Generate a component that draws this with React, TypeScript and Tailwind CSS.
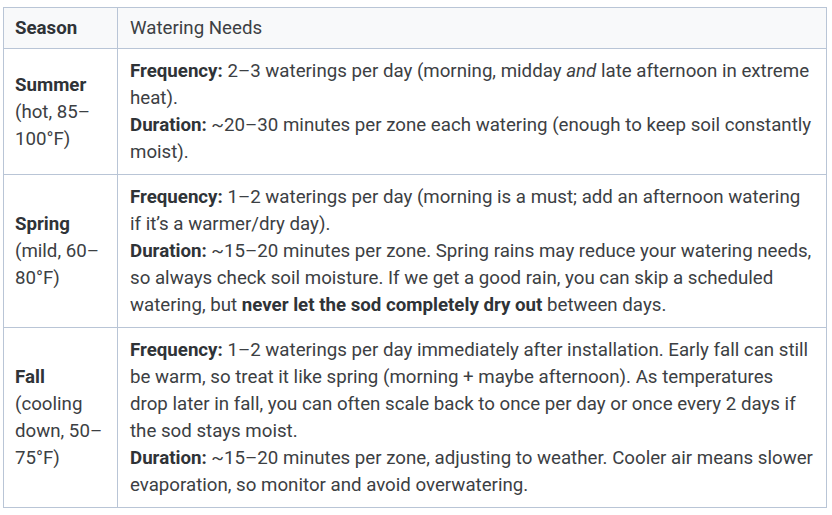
import React from "react";

const cell = "border border-[#b9c5d6] align-top";

export default function App() {
  return (
    <div className="bg-white w-[832px] h-[515px] pl-[3px] pt-[7px] overflow-hidden" style={{ fontFamily: "Roboto, 'Liberation Sans', sans-serif" }}>
      <table className="w-[824px] table-fixed border-collapse text-[18.7px] leading-[27px] text-[#3c4043]">
        <colgroup>
          <col className="w-[114px]" />
          <col />
        </colgroup>
        <thead>
          <tr className="bg-[#f8f9fa]">
            <th className={`${cell} text-left font-bold text-[#2f3337] pl-[11px] pr-[8px] pt-[7px] pb-[6px]`}>Season</th>
            <th className={`${cell} text-left font-normal pl-[12px] pr-[12px] pt-[7px] pb-[6px]`}>Watering Needs</th>
          </tr>
        </thead>
        <tbody>
          <tr>
            <td className="border border-[#b9c5d6] align-middle pl-[11px] pr-[8px] pt-[9px] pb-[8px]">
              <strong className="font-bold text-[#2f3337]">Summer</strong>
              <br />
              (hot, 85–100°F)
            </td>
            <td className={`${cell} pl-[12px] pr-[12px] pt-[9px] pb-[8px]`}>
              <strong className="font-bold text-[#2f3337]">Frequency:</strong> 2–3 waterings per day (morning, midday <em>and</em> late afternoon in extreme heat).
              <br />
              <strong className="font-bold text-[#2f3337]">Duration:</strong> ~20–30 minutes per zone each watering (enough to keep soil constantly moist).
            </td>
          </tr>
          <tr>
            <td className="border border-[#b9c5d6] align-middle pl-[11px] pr-[8px] pt-[9px] pb-[8px]">
              <strong className="font-bold text-[#2f3337]">Spring</strong>
              <br />
              (mild, 60–80°F)
            </td>
            <td className={`${cell} pl-[12px] pr-[12px] pt-[9px] pb-[8px]`}>
              <strong className="font-bold text-[#2f3337]">Frequency:</strong> 1–2 waterings per day (morning is a must; add an afternoon watering if it’s a warmer/dry day).
              <br />
              <strong className="font-bold text-[#2f3337]">Duration:</strong> ~15–20 minutes per zone. Spring rains may reduce your watering needs, so always check soil moisture. If we get a good rain, you can skip a scheduled watering, but <strong className="font-bold text-[#2f3337]">never let the sod completely dry out</strong> between days.
            </td>
          </tr>
          <tr>
            <td className="border border-[#b9c5d6] align-middle pl-[11px] pr-[8px] pt-[9px] pb-[8px]">
              <strong className="font-bold text-[#2f3337]">Fall</strong>
              <br />
              (cooling down, 50–75°F)
            </td>
            <td className={`${cell} pl-[12px] pr-[12px] pt-[9px] pb-[8px]`}>
              <strong className="font-bold text-[#2f3337]">Frequency:</strong> 1–2 waterings per day immediately after installation. Early fall can still be warm, so treat it like spring (morning + maybe afternoon). As temperatures drop later in fall, you can often scale back to once per day or once every 2 days if the sod stays moist.
              <br />
              <strong className="font-bold text-[#2f3337]">Duration:</strong> ~15–20 minutes per zone, adjusting to weather. Cooler air means slower evaporation, so monitor and avoid overwatering.
            </td>
          </tr>
        </tbody>
      </table>
    </div>
  );
}
